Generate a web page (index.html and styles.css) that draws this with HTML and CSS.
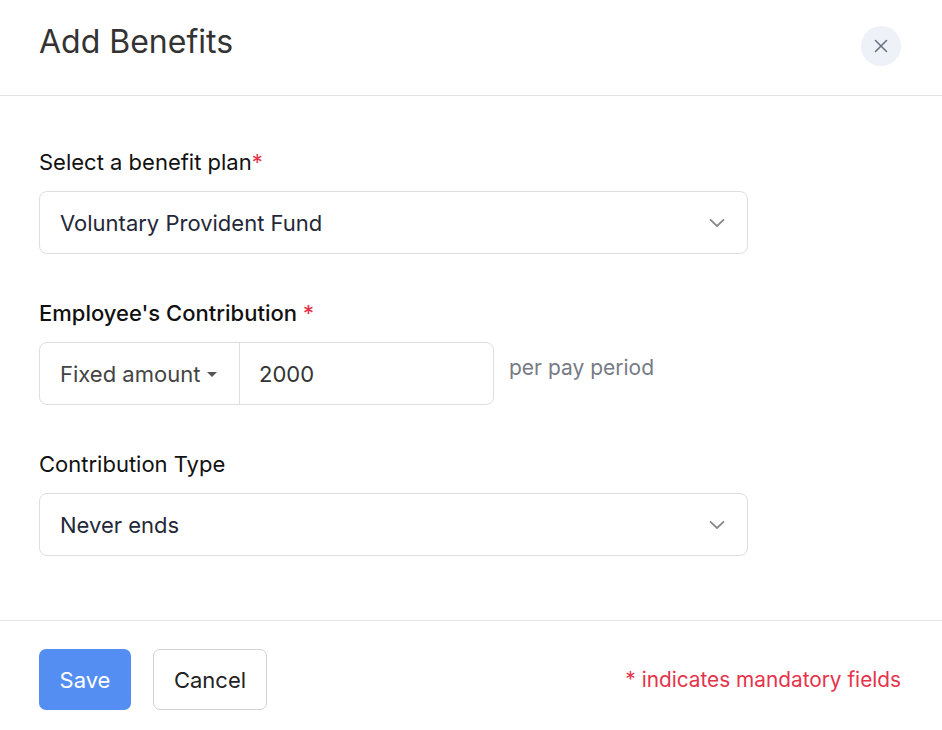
FILE: index.html
```html
<!DOCTYPE html>
<html>
<head>
<meta charset="utf-8">
<link rel="stylesheet" href="styles.css">
</head>
<body>
<div class="dialog">
  <div class="header">
    <h1 class="title">Add Benefits</h1>
    <button class="close" aria-label="Close">
      <svg width="14" height="14" viewBox="0 0 14 14"><path d="M1.5 1.5 L12.5 12.5 M12.5 1.5 L1.5 12.5" stroke="#6b7280" stroke-width="1.6" fill="none" stroke-linecap="round"/></svg>
    </button>
  </div>
  <div class="body">
    <div class="field">
      <div class="label">Select a benefit plan<span class="req">*</span></div>
      <div class="select">
        <span class="value">Voluntary Provident Fund</span>
        <svg class="chev" width="16" height="10" viewBox="0 0 16 10"><path d="M1.5 1.8 L8 8 L14.5 1.8" stroke="#8a8a8a" stroke-width="1.8" fill="none" stroke-linecap="round" stroke-linejoin="round"/></svg>
      </div>
    </div>
    <div class="field">
      <div class="label strong">Employee's Contribution <span class="req">*</span></div>
      <div class="row">
        <div class="group">
          <div class="mode">Fixed amount<span class="caret"></span></div>
          <div class="amount">2000</div>
        </div>
        <span class="hint">per pay period</span>
      </div>
    </div>
    <div class="field">
      <div class="label">Contribution Type</div>
      <div class="select">
        <span class="value">Never ends</span>
        <svg class="chev" width="16" height="10" viewBox="0 0 16 10"><path d="M1.5 1.8 L8 8 L14.5 1.8" stroke="#8a8a8a" stroke-width="1.8" fill="none" stroke-linecap="round" stroke-linejoin="round"/></svg>
      </div>
    </div>
  </div>
  <div class="footer">
    <div class="buttons">
      <button class="btn primary">Save</button>
      <button class="btn secondary">Cancel</button>
    </div>
    <span class="note">* indicates mandatory fields</span>
  </div>
</div>
</body>
</html>
```
FILE: styles.css
```css
* { box-sizing: border-box; }
html, body { margin: 0; padding: 0; background: #fff; }
body { font-family: Inter, "Noto Sans", sans-serif; color: #111; }
.dialog { width: 942px; height: 730px; display: flex; flex-direction: column; }
.header {
  height: 96px;
  border-bottom: 1px solid #e3e3e3;
  display: flex;
  align-items: center;
  justify-content: space-between;
  padding: 0 41px 0 39px;
}
.title { margin: 0; font-size: 32px; font-weight: 400; color: #333; letter-spacing: 0; line-height: 38px; margin-top: -11px; }
.close {
  width: 40px; height: 40px; border-radius: 50%;
  border: none; background: #eef1f8;
  display: flex; align-items: center; justify-content: center;
  padding: 0; margin-top: -4px;
}
.body { padding: 54px 39px 0 39px; display: flex; flex-direction: column; gap: 47px; flex: 1; }
.field { display: flex; flex-direction: column; gap: 17px; }
.label { font-size: 22px; line-height: 24px; color: #111; }
.label.strong { font-weight: 500; }
.req { color: #e5334b; }
.select {
  width: 709px; height: 63px;
  border: 1px solid #dedede; border-radius: 8px;
  display: flex; align-items: center; justify-content: space-between;
  padding: 0 22px 0 20px;
}
.value { font-size: 22px; color: #232839; }
.row { display: flex; align-items: flex-start; gap: 15px; }
.group {
  width: 455px; height: 63px;
  border: 1px solid #dedede; border-radius: 8px;
  display: flex;
}
.mode {
  width: 200px; border-right: 1px solid #dedede;
  display: flex; align-items: center;
  padding-left: 20px; font-size: 22px; color: #444;
}
.caret {
  display: inline-block; width: 0; height: 0;
  border-left: 5.5px solid transparent; border-right: 5.5px solid transparent;
  border-top: 5.5px solid #555; margin-left: 7px; margin-top: 1px;
}
.amount { display: flex; align-items: center; padding-left: 19px; font-size: 22px; color: #333; }
.hint { font-size: 21px; color: #767b85; margin-top: 13px; }
.footer {
  height: 110px;
  border-top: 1px solid #e3e6ea;
  display: flex; align-items: flex-start; justify-content: space-between;
  padding: 28px 41px 0 39px;
}
.buttons { display: flex; gap: 22px; }
.btn { height: 61px; border-radius: 7px; font-family: Inter, "Noto Sans", sans-serif; font-size: 22px; padding: 0; }
.primary { width: 92px; background: #548ef3; color: #fff; border: none; }
.secondary { width: 114px; background: #fff; color: #222; border: 1px solid #d2d2d2; }
.note { font-size: 20.8px; color: #e5334b; margin-top: 18px; }
```
